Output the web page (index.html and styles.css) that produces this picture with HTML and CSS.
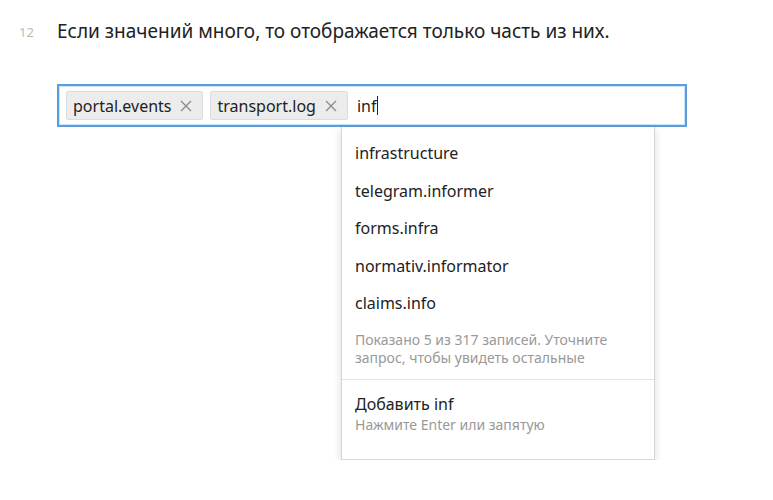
FILE: index.html
```html
<!DOCTYPE html>
<html lang="ru">
<head>
<meta charset="utf-8">
<link rel="stylesheet" href="styles.css">
</head>
<body>
<div class="page">
  <div class="row">
    <div class="num">12</div>
    <div class="content">
      <p class="title">Если значений много, то отображается только часть из них.</p>
      <div class="field">
        <div class="input">
          <span class="tag">portal.events <svg class="x" width="12" height="12" viewBox="0 0 12 12"><path d="M1 1L11 11M11 1L1 11" stroke="#8a8a8a" stroke-width="1.3" fill="none"/></svg></span>
          <span class="tag">transport.log <svg class="x" width="12" height="12" viewBox="0 0 12 12"><path d="M1 1L11 11M11 1L1 11" stroke="#8a8a8a" stroke-width="1.3" fill="none"/></svg></span>
          <span class="typed">inf<span class="caret"></span></span>
        </div>
        <div class="dropdown">
          <div class="items">
            <div class="item">infrastructure</div>
            <div class="item">telegram.informer</div>
            <div class="item">forms.infra</div>
            <div class="item">normativ.informator</div>
            <div class="item">claims.info</div>
          </div>
          <div class="note">Показано 5 из 317 записей. Уточните запрос, чтобы увидеть остальные</div>
          <div class="add">
            <div class="add-title">Добавить inf</div>
            <div class="add-hint">Нажмите Enter или запятую</div>
          </div>
        </div>
      </div>
    </div>
  </div>
</div>
</body>
</html>
```
FILE: styles.css
```css
* { box-sizing: border-box; }
html, body { margin: 0; padding: 0; background: #fff; }
body { font-family: "Noto Sans", "Open Sans", sans-serif; color: #222; }
.page { padding: 18px 0 0 0; }
.row { display: flex; }
.num { width: 57px; padding-left: 19px; font-size: 13px; color: #bbb; line-height: 26px; padding-top: 1px; }
.content { flex: 1; }
.title { margin: 0; font-size: 19px; line-height: 26px; color: #222; }
.field { margin-top: 40px; width: 630px; }
.input {
  height: 43px; border: 2px solid #5a9ee0; box-shadow: inset 0 0 0 1px #cfe2f6;
  display: flex; align-items: center; padding: 0 7px; gap: 7px; background: #fff;
}
.tag {
  display: inline-flex; align-items: center; height: 29px; padding: 0 10px 0 6px;
  background: #ececec; border: 1px solid #dcdcdc; border-radius: 2px; font-size: 16px; color: #222;
}
.x { margin-left: 9px; display: block; }
.typed { font-size: 16px; margin-left: 2px; display: inline-flex; align-items: center; }
.caret { display: inline-block; width: 1px; height: 19px; background: #222; margin-left: 1px; }
.dropdown {
  margin-left: 284px; width: 314px;
  background: #fff; border: 1px solid #d6d6d6; border-top: none;
  box-shadow: 0 3px 8px rgba(0,0,0,0.15);
}
.items { padding-top: 8px; }
.item { font-size: 16px; line-height: 37.5px; padding-left: 13px; color: #222; }
.note { font-size: 14px; color: #999; line-height: 18px; padding: 8px 13px 12px 13px; border-bottom: 1px solid #e3e3e3; }
.add { padding: 13px 13px 24px 13px; }
.add-title { font-size: 16px; line-height: 22px; color: #222; }
.add-hint { font-size: 14px; color: #999; line-height: 20px; }
```
